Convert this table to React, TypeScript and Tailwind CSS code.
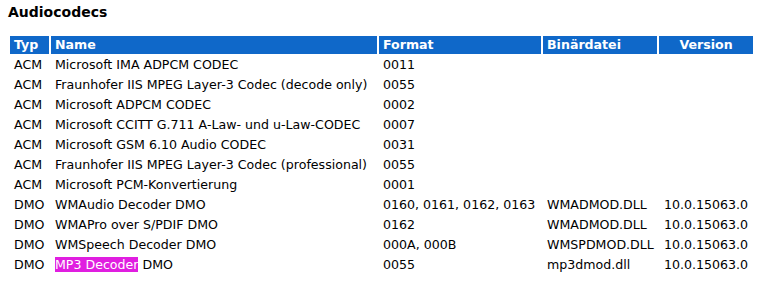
const rows = [
  ["ACM", "Microsoft IMA ADPCM CODEC", "0011", "", ""],
  ["ACM", "Fraunhofer IIS MPEG Layer-3 Codec (decode only)", "0055", "", ""],
  ["ACM", "Microsoft ADPCM CODEC", "0002", "", ""],
  ["ACM", "Microsoft CCITT G.711 A-Law- und u-Law-CODEC", "0007", "", ""],
  ["ACM", "Microsoft GSM 6.10 Audio CODEC", "0031", "", ""],
  ["ACM", "Fraunhofer IIS MPEG Layer-3 Codec (professional)", "0055", "", ""],
  ["ACM", "Microsoft PCM-Konvertierung", "0001", "", ""],
  ["DMO", "WMAudio Decoder DMO", "0160, 0161, 0162, 0163", "WMADMOD.DLL", "10.0.15063.0"],
  ["DMO", "WMAPro over S/PDIF DMO", "0162", "WMADMOD.DLL", "10.0.15063.0"],
  ["DMO", "WMSpeech Decoder DMO", "000A, 000B", "WMSPDMOD.DLL", "10.0.15063.0"],
];

export default function App() {
  return (
    <div className="h-[282px] w-[760px] overflow-hidden bg-white px-2 font-['DejaVu_Sans',Verdana,sans-serif] text-[12.6px] text-black">
      <h1 className="pt-[3px] pb-[12px] text-[14px] leading-[19px] font-bold">Audiocodecs</h1>
      <table className="w-[747px] table-fixed border-separate border-spacing-[2px]">
        <colgroup>
          <col className="w-[39px]" />
          <col className="w-[326px]" />
          <col className="w-[162px]" />
          <col className="w-[114px]" />
          <col className="w-[94px]" />
        </colgroup>
        <thead>
          <tr className="h-[18px] bg-[#0f68c9] text-left font-bold text-white">
            <th className="px-1 py-0 leading-[18px]">Typ</th>
            <th className="px-1 py-0 leading-[18px]">Name</th>
            <th className="px-1 py-0 leading-[18px]">Format</th>
            <th className="px-1 py-0 leading-[18px]">Binärdatei</th>
            <th className="px-1 py-0 text-center leading-[18px]">Version</th>
          </tr>
        </thead>
        <tbody>
          {rows.map((r, i) => (
            <tr key={i} className="h-[18px] leading-[18px]">
              <td className="px-1 whitespace-nowrap">{r[0]}</td>
              <td className="px-1 whitespace-nowrap">{r[1]}</td>
              <td className="px-1 whitespace-nowrap">{r[2]}</td>
              <td className="px-1 whitespace-nowrap">{r[3]}</td>
              <td className="px-1 text-center whitespace-nowrap">{r[4]}</td>
            </tr>
          ))}
          <tr className="h-[18px] leading-[18px]">
            <td className="px-1">DMO</td>
            <td className="px-1 whitespace-nowrap">
              <span className="bg-[#e01ee0] text-white">MP3 Decoder</span> DMO
            </td>
            <td className="px-1">0055</td>
            <td className="px-1">mp3dmod.dll</td>
            <td className="px-1 text-center">10.0.15063.0</td>
          </tr>
        </tbody>
      </table>
    </div>
  );
}
